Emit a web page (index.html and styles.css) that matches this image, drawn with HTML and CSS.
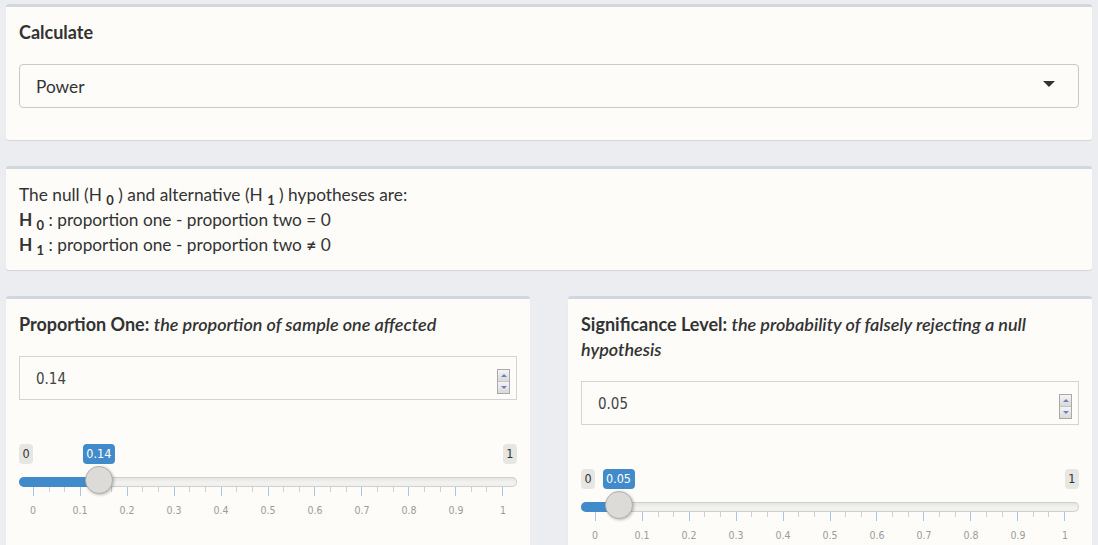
FILE: index.html
```html
<!DOCTYPE html>
<html lang="en">
<head>
<meta charset="utf-8">
<title>Power calculation</title>
<link rel="stylesheet" href="styles.css">
</head>
<body>
<main class="page">
  <section class="box">
    <div class="box-body">
      <label class="field-label">Calculate</label>
      <div class="select"><span>Power</span><span class="caret"></span></div>
    </div>
  </section>

  <section class="box">
    <div class="box-body hyp">
      <div>The null (H <sub>0</sub> ) and alternative (H <sub>1</sub> ) hypotheses are:</div>
      <div><b>H <sub>0</sub></b> : proportion one - proportion two = 0</div>
      <div><b>H <sub>1</sub></b> : proportion one - proportion two <span class="ne">≠</span> 0</div>
    </div>
  </section>

  <div class="cols">
    <section class="box">
      <div class="box-body tall">
        <label class="field-label">Proportion One: <em>the proportion of sample one affected</em></label>
        <div class="num"><span>0.14</span><span class="spin"><span class="spin-btn"><i class="tri-up"></i></span><span class="spin-btn"><i class="tri-down"></i></span></span></div>
        <div class="irs" style="--p:0.14">
          <div class="irs-top"><span class="irs-badge">0</span><span class="irs-val">0.14</span><span class="irs-badge">1</span></div>
          <div class="irs-line"><div class="irs-track"><div class="irs-bar"></div></div><div class="irs-handle"></div></div>
          <div class="irs-ticks"><span class="seg"><i></i><i></i></span><span class="seg"><i></i><i></i></span><span class="seg"><i></i><i></i></span><span class="seg"><i></i><i></i></span><span class="seg"><i></i><i></i></span><span class="seg"><i></i><i></i></span><span class="seg"><i></i><i></i></span><span class="seg"><i></i><i></i></span><span class="seg"><i></i><i></i></span><span class="seg last"><i></i><i></i></span></div>
          <div class="irs-labels"><span>0</span><span>0.1</span><span>0.2</span><span>0.3</span><span>0.4</span><span>0.5</span><span>0.6</span><span>0.7</span><span>0.8</span><span>0.9</span><span>1</span></div>
        </div>
      </div>
    </section>

    <section class="box">
      <div class="box-body tall">
        <label class="field-label">Significance Level: <em>the probability of falsely rejecting a null hypothesis</em></label>
        <div class="num"><span>0.05</span><span class="spin"><span class="spin-btn"><i class="tri-up"></i></span><span class="spin-btn"><i class="tri-down"></i></span></span></div>
        <div class="irs" style="--p:0.05">
          <div class="irs-top"><span class="irs-badge">0</span><span class="irs-val">0.05</span><span class="irs-badge">1</span></div>
          <div class="irs-line"><div class="irs-track"><div class="irs-bar"></div></div><div class="irs-handle"></div></div>
          <div class="irs-ticks"><span class="seg"><i></i><i></i></span><span class="seg"><i></i><i></i></span><span class="seg"><i></i><i></i></span><span class="seg"><i></i><i></i></span><span class="seg"><i></i><i></i></span><span class="seg"><i></i><i></i></span><span class="seg"><i></i><i></i></span><span class="seg"><i></i><i></i></span><span class="seg"><i></i><i></i></span><span class="seg last"><i></i><i></i></span></div>
          <div class="irs-labels"><span>0</span><span>0.1</span><span>0.2</span><span>0.3</span><span>0.4</span><span>0.5</span><span>0.6</span><span>0.7</span><span>0.8</span><span>0.9</span><span>1</span></div>
        </div>
      </div>
    </section>
  </div>
</main>
</body>
</html>
```

FILE: styles.css
```css
* { box-sizing: border-box; }
html, body { margin: 0; }
body {
  background: #ecedf0;
  font-family: Lato, "Noto Sans", sans-serif;
  font-size: 17.3px;
  line-height: 25px;
  color: #333;
  overflow: hidden;
}
.page { padding: 4px 6px 0; }

.box {
  background: #fdfcf8;
  border-top: 3px solid #d2d6de;
  border-radius: 3px;
  box-shadow: 0 1px 1px rgba(0, 0, 0, 0.1);
  margin-bottom: 26px;
}
.box-body { padding: 13px; }
.box-body.tall { padding-bottom: 40px; }
.hyp > div { height: 25px; }

.field-label {
  display: block;
  font-weight: 700;
  font-size: 18px;
  margin-bottom: 19px;
}
.field-label em { font-weight: 600; }

.select {
  height: 44px;
  border: 1px solid #c9c9c9;
  border-radius: 4px;
  display: flex;
  align-items: center;
  justify-content: space-between;
  padding: 0 23px 0 16px;
  margin-bottom: 19px;
}
.caret {
  width: 0;
  height: 0;
  border-left: 6px solid transparent;
  border-right: 6px solid transparent;
  border-top: 6px solid #333;
  margin-bottom: 4px;
}

.hyp sub {
  font-size: 75%;
  font-weight: 700;
  line-height: 0;
  position: relative;
  vertical-align: baseline;
  bottom: -0.3em;
}
.ne { font-weight: 700; }

.cols {
  display: grid;
  grid-template-columns: 1fr 1fr;
  gap: 38px;
}

.num {
  height: 44px;
  border: 1px solid #d3d4da;
  display: flex;
  align-items: center;
  justify-content: space-between;
  padding: 0 6px 0 16px;
  font-family: "DejaVu Sans Condensed", "DejaVu Sans", sans-serif;
  font-size: 15px;
  color: #444;
}
.num > span:first-child { margin-top: 3px; }
.spin {
  display: flex;
  flex-direction: column;
  width: 13px;
  height: 25px;
  border: 1px solid #a9a9a9;
  margin-top: 6px;
  background: #f2f2f2;
}
.spin-btn {
  flex: 1;
  display: flex;
  align-items: center;
  justify-content: center;
  background: linear-gradient(#f4f4f4, #d9d9d9);
}
.spin-btn + .spin-btn { border-top: 1px solid #c4c4c4; }
.tri-up, .tri-down {
  width: 0;
  height: 0;
  border-left: 3px solid transparent;
  border-right: 3px solid transparent;
}
.tri-up { border-bottom: 3px solid #6f7fb8; }
.tri-down { border-top: 3px solid #6f7fb8; }

/* range slider */
.irs {
  margin-top: 44px;
  font-family: "DejaVu Sans Condensed", "DejaVu Sans", sans-serif;
}
.irs-top {
  position: relative;
  display: flex;
  justify-content: space-between;
  height: 20px;
}
.irs-badge, .irs-val {
  font-size: 12.5px;
  line-height: 20px;
  padding: 0 3.5px;
  border-radius: 4px;
}
.irs-badge { background: #e6e6e3; color: #333; }
.irs-val {
  position: absolute;
  top: 0;
  left: calc(14px + var(--p) * (100% - 28px));
  transform: translateX(-50%);
  background: #428bca;
  color: #fff;
}
.irs-line {
  position: relative;
  height: 23px;
  padding-top: 13px;
}
.irs-track {
  height: 10px;
  border-radius: 5px;
  background: linear-gradient(#e2e2df, #f3f3f1 60%, #ededea);
  box-shadow: inset 0 0 0 1px #d0d0cc;
  overflow: hidden;
}
.irs-bar {
  height: 100%;
  width: calc(14px + var(--p) * (100% - 28px));
  background: #428bca;
}
.irs-handle {
  position: absolute;
  top: 2px;
  left: calc(var(--p) * (100% - 28px));
  width: 28px;
  height: 28px;
  border-radius: 50%;
  background: #dcdbd8;
  border: 1px solid #b0b0ad;
  box-shadow: 1px 1px 3px rgba(0, 0, 0, 0.25);
}
.irs-ticks {
  display: flex;
  padding: 0 14px;
  height: 9px;
}
.seg {
  flex: 1;
  display: flex;
  justify-content: space-evenly;
  border-left: 1px solid #a9c5e3;
}
.seg.last { border-right: 1px solid #a9c5e3; }
.seg i {
  width: 1px;
  height: 5px;
  background: #cfcfcf;
}
.irs-labels {
  display: grid;
  grid-template-columns: repeat(11, 1fr);
  margin: 8px calc(14px - (100% - 28px) / 20) 0;
  font-size: 10.5px;
  line-height: 13px;
  color: #9b9b9b;
  text-align: center;
}
```
